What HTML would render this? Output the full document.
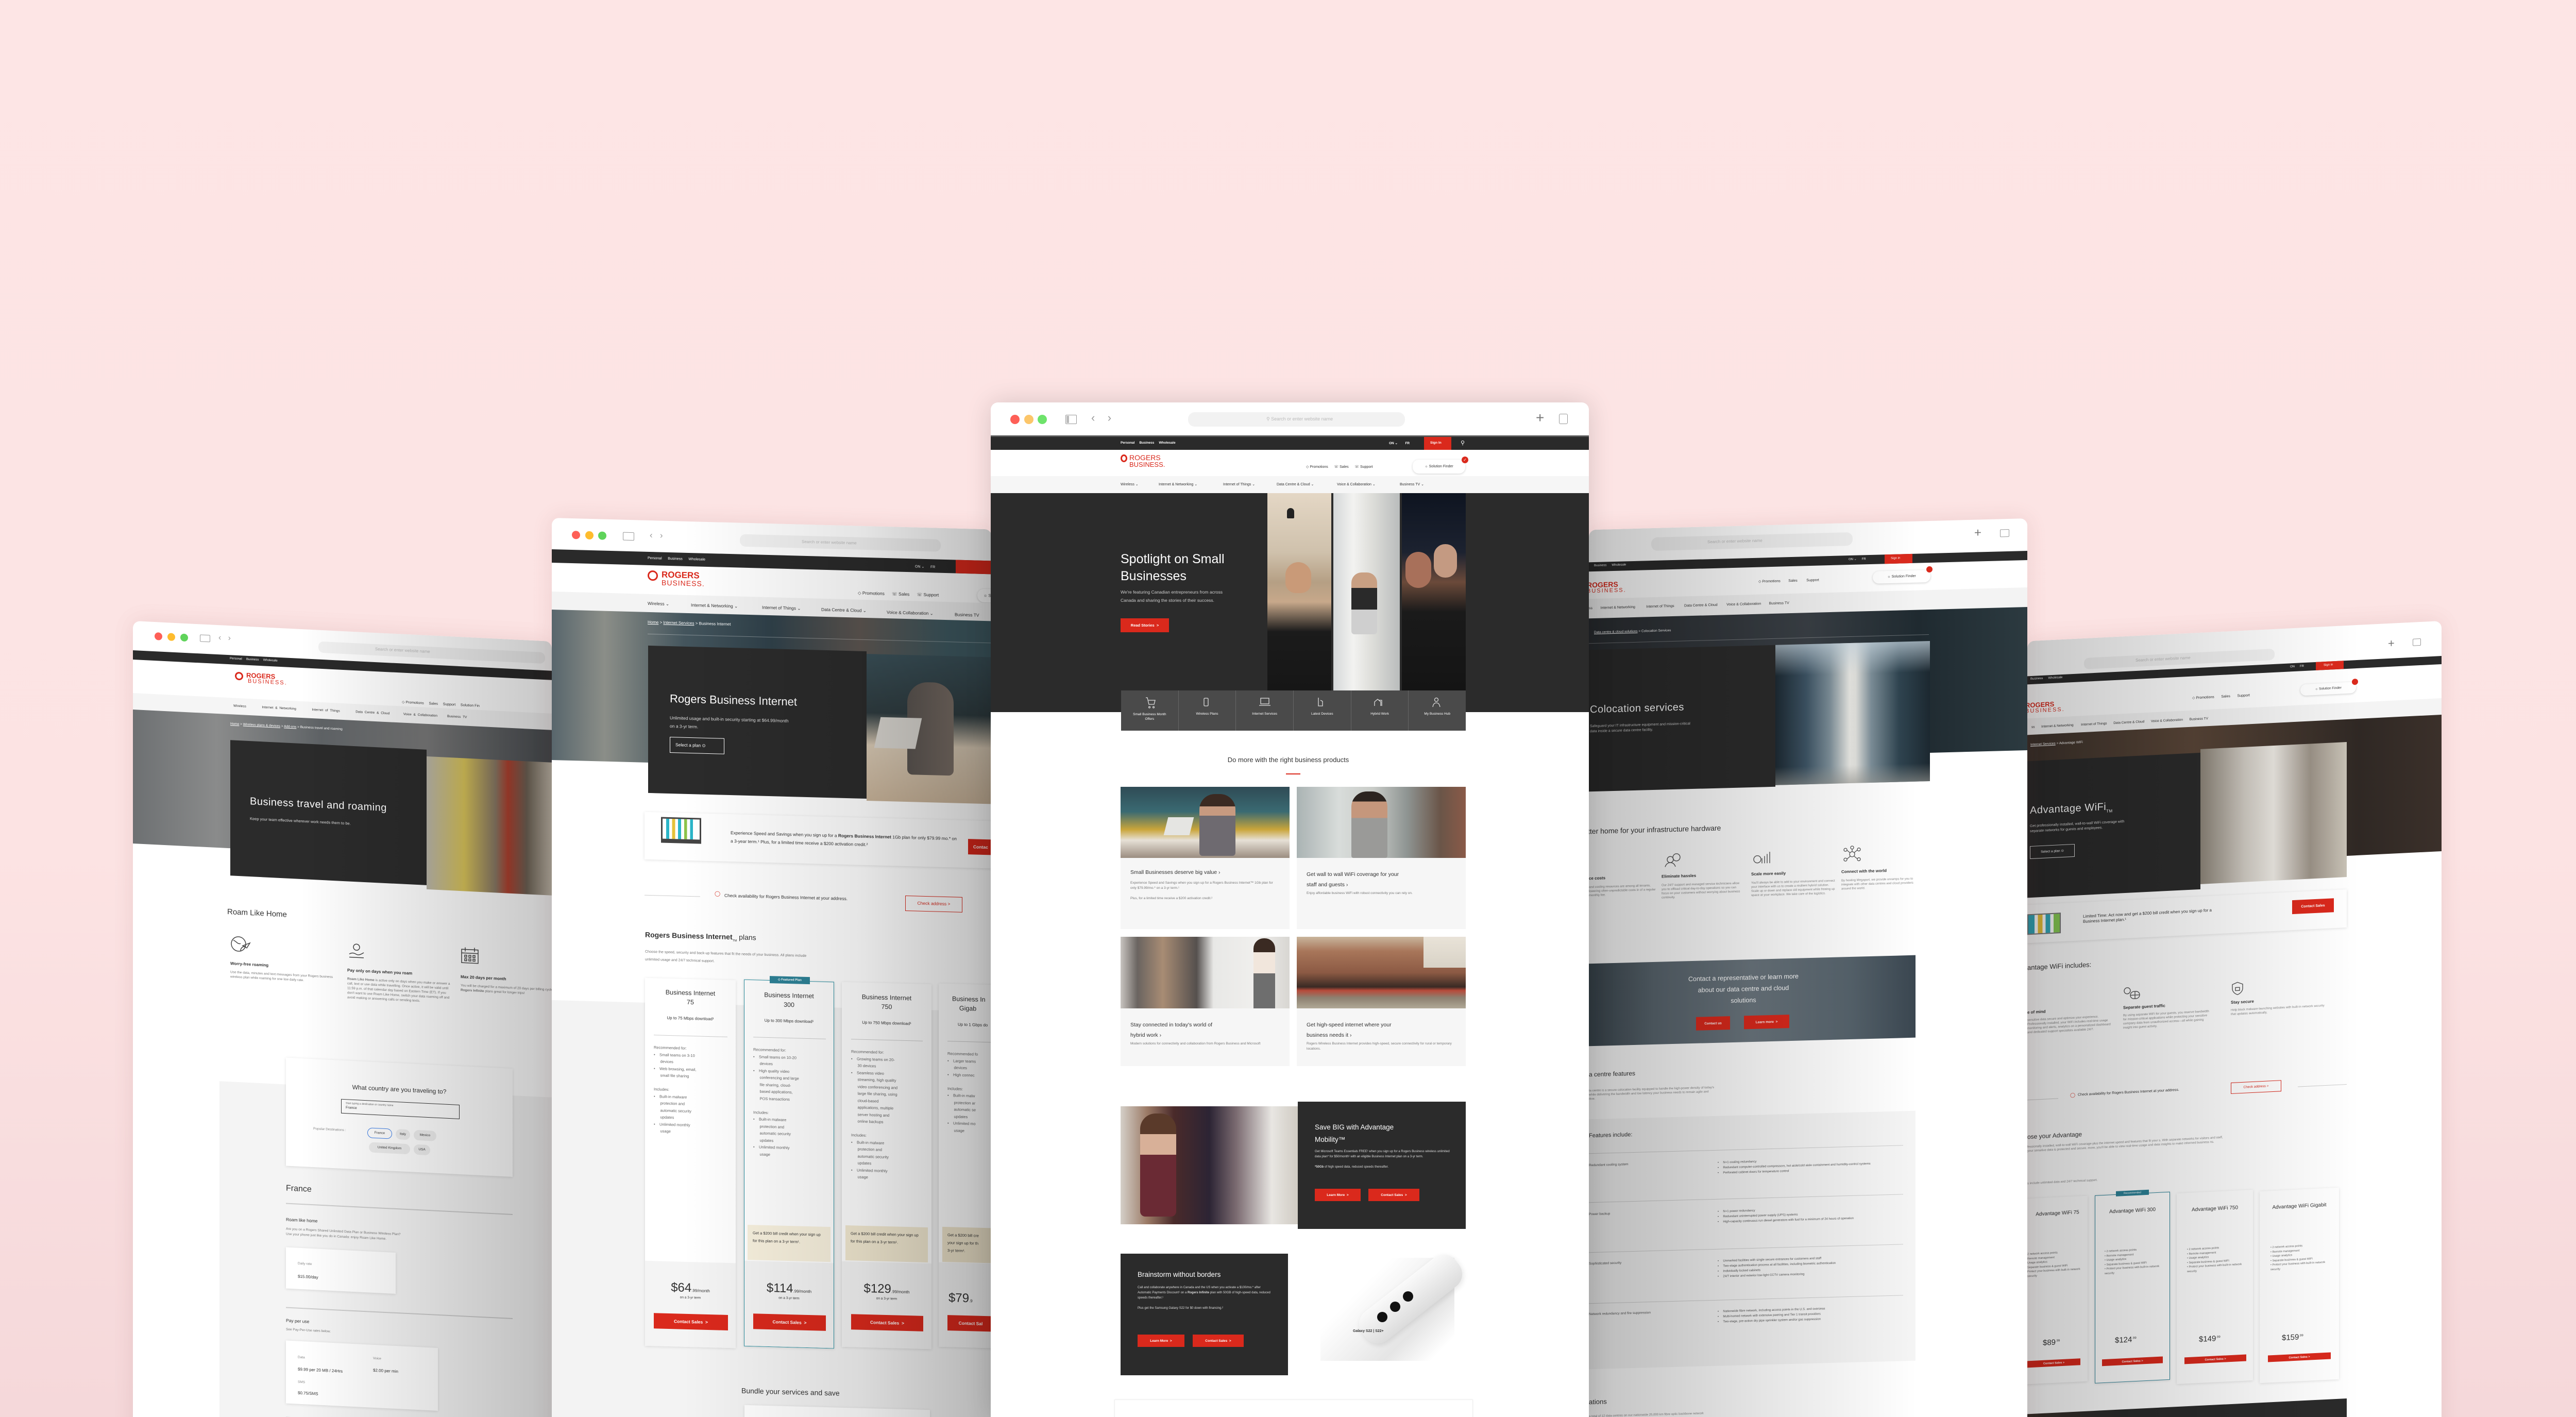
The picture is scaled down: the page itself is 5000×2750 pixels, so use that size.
<!DOCTYPE html>
<html><head><meta charset="utf-8">
<style>
*{margin:0;padding:0;box-sizing:border-box}
html{width:5000px;height:2750px;overflow:hidden;background:#f5d8da}
body{width:5000px;height:2750px;overflow:hidden;position:relative;font-family:"Liberation Sans",Arial,sans-serif;color:#333;
background:linear-gradient(180deg,#fde5e5 0%,#fce3e3 60%,#f5d8da 100%)}
.a{position:absolute}
.win{position:absolute;background:#fff;border-radius:14px 14px 0 0;overflow:hidden;box-shadow:0 0 40px rgba(120,60,60,.12)}
.dot{position:absolute;border-radius:50%}
.t{position:absolute;white-space:nowrap}
.w{color:#fff}
.red{background:#da291c;color:#fff}
.btn{position:absolute;background:#da291c;color:#fff;font-weight:bold;display:flex;align-items:center;justify-content:center;white-space:nowrap}
.card{position:absolute;background:#fff;box-shadow:0 1px 6px rgba(0,0,0,.12)}
.logo{position:absolute;color:#da291c;line-height:1}
.logo .r{position:absolute;left:0;top:1px;border:3px solid #da291c;border-radius:50%}
.ul{text-decoration:underline}
</style></head><body>

<!-- ============ WINDOW A (far left) ============ -->
<div class="win" style="left:258px;top:1205px;width:813px;height:1600px;z-index:1;transform:skewY(2.8deg);transform-origin:0 0">
  <div class="dot" style="left:42px;top:20px;width:15px;height:15px;background:#fe5f57"></div>
  <div class="dot" style="left:67px;top:20px;width:15px;height:15px;background:#febc2e"></div>
  <div class="dot" style="left:92px;top:20px;width:15px;height:15px;background:#5fd35a"></div>
  <div class="a" style="left:130px;top:20px;width:20px;height:14px;border:1.5px solid #999;border-radius:2px"></div>
  <div class="t" style="left:166px;top:16px;font-size:16px;color:#999">&lsaquo; &nbsp; &rsaquo;</div>
  <div class="a" style="left:360px;top:22px;width:440px;height:22px;background:#f2f2f2;border-radius:10px"></div>
  <div class="t" style="left:470px;top:27px;font-size:8px;color:#bbb">Search or enter website name</div>
  <div class="a" style="left:0;top:57px;width:813px;height:18px;background:#2a2a2a"></div>
  <div class="t w" style="left:188px;top:61px;font-size:6px">Personal &nbsp;&nbsp;&nbsp; Business &nbsp;&nbsp;&nbsp; Wholesale</div>
  <div class="logo" style="left:198px;top:88px"><div class="r" style="width:16px;height:16px"></div><div style="margin-left:22px;font-size:13px;font-weight:bold">ROGERS</div><div style="margin-left:25px;font-size:11px;letter-spacing:2px">BUSINESS.</div></div>
  <div class="t" style="left:522px;top:128px;font-size:7px">&#9671; Promotions &nbsp;&nbsp;&nbsp; Sales &nbsp;&nbsp;&nbsp; Support &nbsp;&nbsp;&nbsp; Solution Fin</div>
  <div class="a" style="left:0;top:140px;width:813px;height:32px;background:#f5f5f5"></div>
  <div class="t" style="left:195px;top:152px;font-size:6.5px;word-spacing:2px">Wireless &nbsp;&nbsp;&nbsp;&nbsp;&nbsp;&nbsp; Internet &amp; Networking &nbsp;&nbsp;&nbsp;&nbsp;&nbsp;&nbsp; Internet of Things &nbsp;&nbsp;&nbsp;&nbsp;&nbsp;&nbsp; Data Centre &amp; Cloud &nbsp;&nbsp;&nbsp;&nbsp;&nbsp; Voice &amp; Collaboration &nbsp;&nbsp;&nbsp; Business TV</div>
  <div class="a" style="left:0;top:172px;width:813px;height:260px;background:linear-gradient(90deg,#6d7072,#8a8b8b 20%,#5f6366 45%,#777 70%,#4a4e52)"></div>
  <div class="t w" style="left:189px;top:187px;font-size:6.5px"><span class="ul">Home</span> &gt; <span class="ul">Wireless plans &amp; devices</span> &gt; <span class="ul">Add-ons</span> &gt; Business travel and roaming</div>
  <div class="a" style="left:189px;top:222px;width:381px;height:263px;background:#2b2b2b"></div>
  <div class="t w" style="left:227px;top:328px;font-size:20px;letter-spacing:.5px">Business travel and roaming</div>
  <div class="t" style="left:227px;top:368px;font-size:7.5px;color:#ddd">Keep your team effective wherever work needs them to be.</div>
  <div class="a" style="left:570px;top:235px;width:243px;height:258px;background:linear-gradient(90deg,#b8b4a8,#d9c45a 30%,#8a7a66 55%,#b0412f 65%,#6f6356 80%,#c9c3b3)"></div>
  <div class="t" style="left:183px;top:547px;font-size:15px">Roam Like Home</div>
  <svg class="a" style="left:189px;top:600px" width="40" height="36" viewBox="0 0 40 36" fill="none" stroke="#444" stroke-width="1.5"><circle cx="16" cy="17" r="14"/><path d="M6 10c6 2 8 8 14 6M20 30c0-6 4-8 10-10M24 20l14-6-6 10z"/></svg>
  <div class="t" style="left:189px;top:651px;font-size:8px;font-weight:bold">Worry-free roaming</div>
  <div class="a" style="left:189px;top:668px;width:210px;font-size:6.5px;color:#777;line-height:9px">Use the data, minutes and text messages from your Rogers business wireless plan while roaming for one low daily rate.</div>
  <svg class="a" style="left:416px;top:600px" width="36" height="36" viewBox="0 0 36 36" fill="none" stroke="#444" stroke-width="1.5"><circle cx="18" cy="12" r="6"/><path d="M4 26c6-4 10-2 14 0s8 0 14-4M4 32h28"/></svg>
  <div class="t" style="left:416px;top:653px;font-size:8px;font-weight:bold">Pay only on days when you roam</div>
  <div class="a" style="left:416px;top:670px;width:205px;font-size:6.5px;color:#777;line-height:9px"><b>Roam Like Home</b> is active only on days when you make or answer a call, text or use data while travelling. Once active, it will be valid until 11:59 p.m. of that calendar day based on Eastern Time (ET). If you don't want to use Roam Like Home, switch your data roaming off and avoid making or answering calls or sending texts.</div>
  <svg class="a" style="left:636px;top:600px" width="36" height="36" viewBox="0 0 36 36" fill="none" stroke="#444" stroke-width="1.5"><rect x="2" y="6" width="32" height="26"/><path d="M2 13h32M9 2v8M27 2v8"/><rect x="8" y="17" width="4" height="4"/><rect x="16" y="17" width="4" height="4"/><rect x="24" y="17" width="4" height="4"/><rect x="8" y="24" width="4" height="4"/><rect x="16" y="24" width="4" height="4"/><rect x="24" y="24" width="4" height="4"/></svg>
  <div class="t" style="left:636px;top:655px;font-size:8px;font-weight:bold">Max 20 days per month</div>
  <div class="a" style="left:636px;top:672px;width:190px;font-size:6.5px;color:#777;line-height:9px">You will be charged for a maximum of 20 days per billing cycle on <b>Rogers Infinite</b> plans great for longer trips!</div>
  <div class="a" style="left:168px;top:885px;width:645px;height:715px;background:#f4f4f4"></div>
  <div class="card" style="left:297px;top:833px;width:440px;height:210px"></div>
  <div class="t" style="left:297px;top:877px;width:440px;text-align:center;font-size:12px">What country are you traveling to?</div>
  <div class="a" style="left:404px;top:908px;width:230px;height:28px;border:1.5px solid #333"></div>
  <div class="t" style="left:413px;top:913px;font-size:5px;color:#666">Start typing a destination or country name</div>
  <div class="t" style="left:413px;top:921px;font-size:7px">France</div>
  <div class="t" style="left:350px;top:965px;font-size:6.5px;color:#888">Popular Destinations :</div>
  <div class="a" style="left:455px;top:961px;width:48px;height:20px;border:1.5px solid #3d7ee8;border-radius:10px;font-size:6.5px;text-align:center;line-height:17px">France</div>
  <div class="a" style="left:510px;top:961px;width:28px;height:20px;background:#eee;border-radius:10px;font-size:6.5px;text-align:center;line-height:20px">Italy</div>
  <div class="a" style="left:545px;top:961px;width:44px;height:20px;background:#eee;border-radius:10px;font-size:6.5px;text-align:center;line-height:20px">Mexico</div>
  <div class="a" style="left:458px;top:989px;width:80px;height:20px;background:#eee;border-radius:10px;font-size:6.5px;text-align:center;line-height:20px">United Kingdom</div>
  <div class="a" style="left:545px;top:989px;width:32px;height:20px;background:#eee;border-radius:10px;font-size:6.5px;text-align:center;line-height:20px">USA</div>
  <div class="t" style="left:297px;top:1078px;font-size:16px">France</div>
  <div class="a" style="left:297px;top:1115px;width:440px;height:2px;background:#ccc"></div>
  <div class="t" style="left:297px;top:1142px;font-size:8.5px">Roam like home</div>
  <div class="t" style="left:297px;top:1161px;font-size:6.5px;color:#777;line-height:10px">Are you on a Rogers Shared Unlimited Data Plan or Business Wireless Plan?<br>Use your phone just like you do in Canada: enjoy Roam Like Home.</div>
  <div class="card" style="left:297px;top:1201px;width:213px;height:80px"></div>
  <div class="t" style="left:320px;top:1228px;font-size:6.5px;color:#888">Daily rate</div>
  <div class="t" style="left:320px;top:1252px;font-size:8px">$15.00/day</div>
  <div class="a" style="left:297px;top:1317px;width:440px;height:2px;background:#ccc"></div>
  <div class="t" style="left:297px;top:1338px;font-size:8.5px">Pay per use</div>
  <div class="t" style="left:297px;top:1357px;font-size:6.5px;color:#777">See Pay-Per-Use rates below.</div>
  <div class="card" style="left:297px;top:1382px;width:295px;height:122px"></div>
  <div class="t" style="left:320px;top:1410px;font-size:6.5px;color:#888">Data</div>
  <div class="t" style="left:320px;top:1432px;font-size:8px">$9.99 per 20 MB / 24Hrs</div>
  <div class="t" style="left:320px;top:1458px;font-size:6.5px;color:#888">SMS</div>
  <div class="t" style="left:320px;top:1478px;font-size:8px">$0.75/SMS</div>
  <div class="t" style="left:466px;top:1405px;font-size:6.5px;color:#888">Voice</div>
  <div class="t" style="left:466px;top:1427px;font-size:8px">$2.00 per min</div>
  <div class="a" style="left:297px;top:1530px;width:440px;height:2px;background:#ccc"></div>
  <div class="a" style="left:0;top:0;width:813px;height:1600px;background:linear-gradient(90deg,rgba(0,0,0,0) 40%,rgba(0,0,0,.22) 100%)"></div>
</div>

<!-- ============ WINDOW E (far right) ============ -->
<div class="win" style="left:3935px;top:1205px;width:804px;height:1600px;z-index:1;transform:skewY(-2.8deg);transform-origin:100% 0">
  <div class="a" style="left:110px;top:38px;width:370px;height:22px;background:#f2f2f2;border-radius:10px"></div>
  <div class="t" style="left:210px;top:43px;font-size:8px;color:#bbb">Search or enter website name</div>
  <div class="t" style="left:700px;top:26px;font-size:22px;color:#777">+</div>
  <div class="a" style="left:748px;top:32px;width:16px;height:14px;border:1.5px solid #999;border-radius:2px"></div>
  <div class="a" style="left:0;top:68px;width:804px;height:16px;background:#2a2a2a"></div>
  <div class="t w" style="left:6px;top:71px;font-size:6px">Business &nbsp;&nbsp;&nbsp;&nbsp; Wholesale</div>
  <div class="a red" style="left:560px;top:68px;width:54px;height:16px"></div>
  <div class="t w" style="left:575px;top:72px;font-size:6px">Sign in</div>
  <div class="t w" style="left:510px;top:72px;font-size:6px">ON &nbsp;&nbsp;&nbsp;&nbsp; FR</div>
  <div class="logo" style="left:-4px;top:118px"><div style="font-size:13px;font-weight:bold">ROGERS</div><div style="font-size:11px;letter-spacing:2px">BUSINESS.</div></div>
  <div class="t" style="left:320px;top:122px;font-size:7px">&#9671; Promotions &nbsp;&nbsp;&nbsp;&nbsp;&nbsp; Sales &nbsp;&nbsp;&nbsp;&nbsp;&nbsp; Support</div>
  <div class="a" style="left:530px;top:110px;width:108px;height:22px;border-radius:11px;box-shadow:0 1px 4px rgba(0,0,0,.2);font-size:6.5px;line-height:22px;text-align:center">&#9788; Solution Finder</div>
  <div class="dot" style="left:630px;top:104px;width:12px;height:12px;background:#da291c"></div>
  <div class="a" style="left:0;top:150px;width:804px;height:32px;background:#f4f4f4"></div>
  <div class="t" style="left:8px;top:164px;font-size:6.5px">ss &nbsp;&nbsp;&nbsp;&nbsp;&nbsp; Internet &amp; Networking &nbsp;&nbsp;&nbsp;&nbsp;&nbsp;&nbsp; Internet of Things &nbsp;&nbsp;&nbsp;&nbsp;&nbsp; Data Centre &amp; Cloud &nbsp;&nbsp;&nbsp;&nbsp;&nbsp; Voice &amp; Collaboration &nbsp;&nbsp;&nbsp;&nbsp;&nbsp; Business TV</div>
  <div class="a" style="left:0;top:182px;width:804px;height:265px;background:linear-gradient(90deg,#3d332c,#5a4638 40%,#2f2824 80%,#3b302a)"></div>
  <div class="t w" style="left:6px;top:198px;font-size:6.5px"><span class="ul">Internet Services</span> &gt; Advantage WiFi</div>
  <div class="a" style="left:0;top:233px;width:336px;height:265px;background:#2b2b2b"></div>
  <div class="t w" style="left:5px;top:318px;font-size:20px;letter-spacing:.5px">Advantage WiFi<sub style="font-size:8px">TM</sub></div>
  <div class="t" style="left:5px;top:355px;font-size:7px;color:#ddd;line-height:10px">Get professionally installed, wall-to-wall WiFi coverage with<br>separate networks for guests and employees.</div>
  <div class="a" style="left:5px;top:398px;width:87px;height:25px;border:1px solid #ddd;color:#fff;font-size:6.5px;line-height:23px;text-align:center">Select a plan &#8857;</div>
  <div class="a" style="left:336px;top:226px;width:284px;height:262px;background:linear-gradient(90deg,#8c8478,#cfcac2 30%,#e9e6e0 50%,#9a9186 75%,#c8c2b6)"></div>
  <div class="card" style="left:0;top:512px;width:620px;height:74px"></div>
  <div class="a" style="left:0;top:530px;width:65px;height:40px;border:2px solid #777;background:linear-gradient(90deg,#3ab 0 20%,#fff 20% 30%,#e9c33a 30% 45%,#fff 45% 55%,#3ab 55% 70%,#fff 70% 80%,#8c5 80%)"></div>
  <div class="t" style="left:108px;top:535px;font-size:8px;line-height:10px">Limited Time: Act now and get a $200 bill credit when you sign up for a<br>Business Internet plan.¹</div>
  <div class="btn" style="left:514px;top:528px;width:81px;height:27px;font-size:7px">Contact Sales</div>
  <div class="t" style="left:0;top:626px;font-size:13px">antage WiFi includes:</div>
  <div class="t" style="left:0;top:716px;font-size:8px;font-weight:bold">e of mind</div>
  <div class="a" style="left:0;top:732px;width:170px;font-size:6px;color:#888;line-height:8px">sensitive data secure and optimize your experience. Professionally installed, your WiFi includes real-time usage monitoring and alerts, analytics on a personalized dashboard and dedicated support specialists available 24/7.</div>
  <svg class="a" style="left:186px;top:680px" width="34" height="28" viewBox="0 0 34 28" fill="none" stroke="#555" stroke-width="1.4"><circle cx="8" cy="8" r="6"/><rect x="14" y="10" width="18" height="14" rx="7"/><path d="M23 10v14M14 17h18"/></svg>
  <div class="t" style="left:186px;top:716px;font-size:8px;font-weight:bold">Separate guest traffic</div>
  <div class="a" style="left:186px;top:732px;width:175px;font-size:6px;color:#888;line-height:8px">By using separate WiFi for your guests, you reserve bandwidth for mission-critical applications while protecting your sensitive company data from unauthorized access—all while gaining insight into guest activity.</div>
  <svg class="a" style="left:395px;top:680px" width="26" height="28" viewBox="0 0 26 28" fill="none" stroke="#555" stroke-width="1.4"><path d="M13 2l10 4v8c0 6-5 10-10 12C8 24 3 20 3 14V6z"/><rect x="9" y="12" width="8" height="6"/></svg>
  <div class="t" style="left:395px;top:716px;font-size:8px;font-weight:bold">Stay secure</div>
  <div class="a" style="left:395px;top:732px;width:185px;font-size:6px;color:#888;line-height:8px">Help block malware-launching websites with built-in network security that updates automatically.</div>
  <div class="a" style="left:0;top:890px;width:60px;height:1px;background:#ccc"></div>
  <div class="t" style="left:83px;top:880px;font-size:9px;color:#da291c">&#9711;</div>
  <div class="t" style="left:98px;top:882px;font-size:7px">Check availability for Rogers Business Internet at your address.</div>
  <div class="a" style="left:395px;top:876px;width:98px;height:22px;border:1.5px solid #da291c;color:#da291c;font-size:6.5px;line-height:19px;text-align:center">Check address &gt;</div>
  <div class="a" style="left:525px;top:890px;width:95px;height:1px;background:#ccc"></div>
  <div class="t" style="left:0;top:955px;font-size:12px">ose your Advantage</div>
  <div class="a" style="left:0;top:978px;width:380px;font-size:6px;color:#888;line-height:8px">fessionally installed, wall-to-wall WiFi coverage plus the internet speed and features that fit your s. With separate networks for visitors and staff, your sensitive data is protected and secure. more, you'll be able to view real-time usage and data insights to make informed business ns.</div>
  <div class="t" style="left:0;top:1050px;font-size:6px;color:#888">s include unlimited data and 24/7 technical support.</div>

  <div class="card" style="left:-10px;top:1082px;width:127px;height:360px"></div>
  <div class="card" style="left:131px;top:1082px;width:146px;height:365px;border:1.5px solid #2d8297"></div>
  <div class="a" style="left:172px;top:1076px;width:64px;height:10px;background:#2d8297;color:#fff;font-size:5px;text-align:center;line-height:10px">Recommended</div>
  <div class="card" style="left:290px;top:1086px;width:148px;height:370px"></div>
  <div class="card" style="left:451px;top:1090px;width:154px;height:372px"></div>
  <div class="t" style="left:0;top:1108px;font-size:10px;text-align:center;width:117px;line-height:11px;white-space:normal">Advantage WiFi 75</div>
  <div class="t" style="left:131px;top:1110px;font-size:10px;text-align:center;width:146px;line-height:11px;white-space:normal">Advantage WiFi 300</div>
  <div class="t" style="left:290px;top:1114px;font-size:10px;text-align:center;width:148px;line-height:11px;white-space:normal">Advantage WiFi 750</div>
  <div class="t" style="left:451px;top:1117px;font-size:10px;text-align:center;width:154px;line-height:11px;white-space:normal">Advantage WiFi Gigabit</div>
  <div class="a" style="left:150px;top:1188px;width:120px;font-size:5.5px;color:#666;line-height:8.5px">• 2 network access points<br>• Remote management<br>• Usage analytics<br>• Separate business &amp; guest WiFi<br>• Protect your business with built-in network security</div>
  <div class="a" style="left:310px;top:1192px;width:120px;font-size:5.5px;color:#666;line-height:8.5px">• 2 network access points<br>• Remote management<br>• Usage analytics<br>• Separate business &amp; guest WiFi<br>• Protect your business with built-in network security</div>
  <div class="a" style="left:472px;top:1196px;width:125px;font-size:5.5px;color:#666;line-height:8.5px">• 2 network access points<br>• Remote management<br>• Usage analytics<br>• Separate business &amp; guest WiFi<br>• Protect your business with built-in network security</div>
  <div class="a" style="left:0;top:1186px;width:110px;font-size:5.5px;color:#666;line-height:8.5px">2 network access points<br>Remote management<br>Usage analytics<br>Separate business &amp; guest WiFi<br>Protect your business with built-in network security</div>
  <div class="t" style="left:30px;top:1355px;font-size:15px">$89<sup style="font-size:6px">.99</sup></div>
  <div class="t" style="left:170px;top:1357px;font-size:15px">$124<sup style="font-size:6px">.99</sup></div>
  <div class="t" style="left:333px;top:1363px;font-size:15px">$149<sup style="font-size:6px">.99</sup></div>
  <div class="t" style="left:494px;top:1368px;font-size:15px">$159<sup style="font-size:6px">.99</sup></div>
  <div class="btn" style="left:0;top:1397px;width:103px;height:13px;font-size:5.5px">Contact Sales &gt;</div>
  <div class="btn" style="left:145px;top:1401px;width:118px;height:13px;font-size:5.5px">Contact Sales &gt;</div>
  <div class="btn" style="left:305px;top:1405px;width:120px;height:13px;font-size:5.5px">Contact Sales &gt;</div>
  <div class="btn" style="left:467px;top:1409px;width:122px;height:13px;font-size:5.5px">Contact Sales &gt;</div>
  <div class="a" style="left:0;top:1500px;width:620px;height:100px;background:linear-gradient(90deg,#3a302a,#2b2b2b 30%)"></div>
  <div class="t w" style="left:191px;top:1524px;font-size:12px">Get the WiFi advantage</div>
  <div class="a" style="left:0;top:0;width:804px;height:1600px;background:linear-gradient(90deg,rgba(0,0,0,.22) 0%,rgba(0,0,0,.05) 60%,rgba(0,0,0,0) 80%)"></div>
</div>

<!-- ============ WINDOW B (left center) ============ -->
<div class="win" style="left:1071px;top:1005px;width:854px;height:1800px;z-index:2;transform:skewY(1.5deg);transform-origin:0 0">
  <div class="dot" style="left:39px;top:24px;width:16px;height:16px;background:#fe5f57"></div>
  <div class="dot" style="left:65px;top:24px;width:16px;height:16px;background:#febc2e"></div>
  <div class="dot" style="left:90px;top:24px;width:16px;height:16px;background:#5fd35a"></div>
  <div class="a" style="left:138px;top:24px;width:22px;height:16px;border:1.5px solid #999;border-radius:2px"></div>
  <div class="t" style="left:190px;top:19px;font-size:17px;color:#999">&lsaquo; &nbsp; &rsaquo;</div>
  <div class="a" style="left:365px;top:22px;width:390px;height:24px;background:#f2f2f2;border-radius:11px"></div>
  <div class="t" style="left:485px;top:29px;font-size:8px;color:#bbb">Search or enter website name</div>
  <div class="a" style="left:0;top:61px;width:854px;height:26px;background:#2a2a2a"></div>
  <div class="t w" style="left:186px;top:70px;font-size:7px">Personal &nbsp;&nbsp;&nbsp;&nbsp; Business &nbsp;&nbsp;&nbsp;&nbsp; Wholesale</div>
  <div class="t w" style="left:705px;top:72px;font-size:7px">ON &#8964; &nbsp;&nbsp;&nbsp;&nbsp; FR</div>
  <div class="a red" style="left:784px;top:61px;width:70px;height:26px"></div>
  <div class="logo" style="left:186px;top:96px"><div class="r" style="width:20px;height:20px"></div><div style="margin-left:27px;font-size:17px;font-weight:bold">ROGERS</div><div style="margin-left:27px;font-size:14px;letter-spacing:1px">BUSINESS.</div></div>
  <div class="t" style="left:594px;top:125px;font-size:8.5px">&#9671; Promotions &nbsp;&nbsp;&nbsp;&nbsp; &#9743; Sales &nbsp;&nbsp;&nbsp;&nbsp; &#9743; Support</div>
  <div class="a" style="left:826px;top:116px;width:60px;height:26px;border-radius:13px;box-shadow:0 1px 4px rgba(0,0,0,.2);font-size:8px;line-height:26px;padding-left:12px">&#9788; Solu</div>
  <div class="a" style="left:0;top:143px;width:854px;height:35px;background:#f3f3f3"></div>
  <div class="t" style="left:186px;top:156px;font-size:8.5px">Wireless &#8964;</div>
  <div class="t" style="left:270px;top:157px;font-size:8.5px">Internet &amp; Networking &#8964;</div>
  <div class="t" style="left:408px;top:158px;font-size:8.5px">Internet of Things &#8964;</div>
  <div class="t" style="left:523px;top:159px;font-size:8.5px">Data Centre &amp; Cloud &#8964;</div>
  <div class="t" style="left:650px;top:161px;font-size:8.5px">Voice &amp; Collaboration &#8964;</div>
  <div class="t" style="left:782px;top:162px;font-size:8.5px">Business TV</div>
  <div class="a" style="left:0;top:178px;width:854px;height:292px;background:linear-gradient(90deg,#58666c,#8b8e88 12%,#44555d 30%,#2f4049 50%,#5c5550 70%,#3f5a62 90%)"></div>
  <div class="t w" style="left:186px;top:193px;font-size:8px"><span class="ul">Home</span> &gt; <span class="ul">Internet Services</span> &gt; Business Internet</div>
  <div class="a" style="left:186px;top:220px;width:668px;height:1px;background:rgba(255,255,255,.35)"></div>
  <div class="a" style="left:187px;top:243px;width:424px;height:286px;background:#2b2b2b"></div>
  <div class="t w" style="left:229px;top:332px;font-size:22px">Rogers Business Internet</div>
  <div class="t" style="left:229px;top:374px;font-size:8.5px;color:#ddd;line-height:16px">Unlimited usage and built-in security starting at $64.99/month<br>on a 3-yr term.</div>
  <div class="a" style="left:229px;top:419px;width:106px;height:31px;border:1px solid #fff;color:#fff;font-size:8.5px;line-height:29px;padding-left:10px">Select a plan &#8857;</div>
  <div class="a" style="left:611px;top:248px;width:243px;height:285px;background:linear-gradient(180deg,#3a5058 0%,#2f3c40 40%,#d8c9b4 62%,#c9b49a 100%)"></div>
  <div class="a" style="left:690px;top:300px;width:90px;height:180px;background:linear-gradient(90deg,#5a5450,#7a6e66);border-radius:40px 40px 10px 10px"></div>
  <div class="a" style="left:632px;top:370px;width:80px;height:60px;background:#d9d6d0;transform:skewX(-12deg)"></div>
  <div class="card" style="left:180px;top:566px;width:674px;height:92px"></div>
  <div class="a" style="left:212px;top:575px;width:78px;height:50px;border:3px solid #444;border-bottom-width:8px;background:linear-gradient(90deg,#fff 10%,#2bb5c8 10% 18%,#fff 18% 26%,#e5c23a 26% 34%,#fff 34% 42%,#2bb5c8 42% 50%,#fff 50% 58%,#8bc34a 58% 66%,#fff 66% 74%,#2bb5c8 74% 82%,#fff 82%)"></div>
  <div class="a" style="left:347px;top:594px;width:440px;font-size:8.5px;line-height:16px">Experience Speed and Savings when you sign up for a <b>Rogers Business Internet</b> 1Gb plan for only $79.99 mo.* on a 3-year term.¹ Plus, for a limited time receive a $200 activation credit.²</div>
  <div class="btn" style="left:808px;top:602px;width:60px;height:30px;font-size:8.5px;justify-content:flex-start;padding-left:10px">Contac</div>
  <div class="a" style="left:180px;top:727px;width:108px;height:1px;background:#ccc"></div>
  <div class="t" style="left:316px;top:716px;font-size:10px;color:#da291c">&#9711;</div>
  <div class="t" style="left:335px;top:719px;font-size:8.5px">Check availability for Rogers Business Internet at your address.</div>
  <div class="a" style="left:686px;top:715px;width:111px;height:30px;border:1.5px solid #da291c;color:#da291c;font-size:8.5px;line-height:27px;text-align:center">Check address &gt;</div>
  <div class="a" style="left:0;top:936px;width:854px;height:864px;background:#f3f3f3"></div>
  <div class="t" style="left:181px;top:796px;font-size:14px"><b>Rogers Business Internet</b><sub style="font-size:6px">TM</sub> plans</div>
  <div class="t" style="left:181px;top:830px;font-size:7px;color:#777;line-height:15px">Choose the speed, security and back-up features that fit the needs of your business. All plans include<br>unlimited usage and 24/7 technical support.</div>

  <div class="card" style="left:181px;top:888px;width:176px;height:714px"></div>
  <div class="card" style="left:373px;top:886px;width:175px;height:712px;border:1.5px solid #2b8fa0"></div>
  <div class="a" style="left:423px;top:878px;width:78px;height:14px;background:#2d8297;color:#fff;font-size:6px;text-align:center;line-height:14px;font-weight:bold">&#9671; Featured Plan</div>
  <div class="card" style="left:563px;top:886px;width:174px;height:708px"></div>
  <div class="card" style="left:751px;top:884px;width:110px;height:705px"></div>
  <div class="a" style="left:181px;top:1437px;width:176px;height:165px;background:#f4f4f4"></div>
  <div class="a" style="left:374px;top:1432px;width:173px;height:165px;background:#f4f4f4"></div>
  <div class="a" style="left:563px;top:1428px;width:174px;height:166px;background:#f4f4f4"></div>
  <div class="a" style="left:751px;top:1425px;width:110px;height:164px;background:#f4f4f4"></div>
  <div class="t" style="left:181px;top:906px;width:176px;text-align:center;font-size:12.5px;line-height:18px;white-space:normal">Business Internet<br>75</div>
  <div class="t" style="left:373px;top:906px;width:175px;text-align:center;font-size:12.5px;line-height:18px;white-space:normal">Business Internet<br>300</div>
  <div class="t" style="left:563px;top:905px;width:174px;text-align:center;font-size:12.5px;line-height:18px;white-space:normal">Business Internet<br>750</div>
  <div class="t" style="left:777px;top:904px;font-size:12.5px;line-height:18px">Business In<br>&nbsp;&nbsp;&nbsp;&nbsp;Gigab</div>
  <div class="t" style="left:181px;top:960px;width:176px;text-align:center;font-size:8px">Up to 75 Mbps download¹</div>
  <div class="t" style="left:373px;top:960px;width:175px;text-align:center;font-size:8px">Up to 300 Mbps download¹</div>
  <div class="t" style="left:563px;top:959px;width:174px;text-align:center;font-size:8px">Up to 750 Mbps download¹</div>
  <div class="t" style="left:788px;top:958px;font-size:8px">Up to 1 Gbps do</div>
  <div class="a" style="left:198px;top:998px;width:143px;height:1px;background:#ccc"></div>
  <div class="a" style="left:391px;top:997px;width:141px;height:1px;background:#ccc"></div>
  <div class="a" style="left:581px;top:996px;width:139px;height:1px;background:#ccc"></div>
  <div class="a" style="left:768px;top:995px;width:90px;height:1px;background:#ccc"></div>
  <div class="a" style="left:198px;top:1016px;width:145px;font-size:7.5px;color:#666;line-height:13.5px">Recommended for:<br>• &nbsp;&nbsp;&nbsp;Small teams on 3-10<br>&nbsp;&nbsp;&nbsp;&nbsp;&nbsp;&nbsp;devices<br>• &nbsp;&nbsp;&nbsp;Web browsing, email,<br>&nbsp;&nbsp;&nbsp;&nbsp;&nbsp;&nbsp;small file sharing<br><br>Includes:<br>• &nbsp;&nbsp;&nbsp;Built-in malware<br>&nbsp;&nbsp;&nbsp;&nbsp;&nbsp;&nbsp;protection and<br>&nbsp;&nbsp;&nbsp;&nbsp;&nbsp;&nbsp;automatic security<br>&nbsp;&nbsp;&nbsp;&nbsp;&nbsp;&nbsp;updates<br>• &nbsp;&nbsp;&nbsp;Unlimited monthly<br>&nbsp;&nbsp;&nbsp;&nbsp;&nbsp;&nbsp;usage</div>
  <div class="a" style="left:391px;top:1015px;width:145px;font-size:7.5px;color:#666;line-height:13.5px">Recommended for:<br>• &nbsp;&nbsp;&nbsp;Small teams on 10-20<br>&nbsp;&nbsp;&nbsp;&nbsp;&nbsp;&nbsp;devices<br>• &nbsp;&nbsp;&nbsp;High quality video<br>&nbsp;&nbsp;&nbsp;&nbsp;&nbsp;&nbsp;conferencing and large<br>&nbsp;&nbsp;&nbsp;&nbsp;&nbsp;&nbsp;file sharing, cloud-<br>&nbsp;&nbsp;&nbsp;&nbsp;&nbsp;&nbsp;based applications,<br>&nbsp;&nbsp;&nbsp;&nbsp;&nbsp;&nbsp;POS transactions<br><br>Includes:<br>• &nbsp;&nbsp;&nbsp;Built-in malware<br>&nbsp;&nbsp;&nbsp;&nbsp;&nbsp;&nbsp;protection and<br>&nbsp;&nbsp;&nbsp;&nbsp;&nbsp;&nbsp;automatic security<br>&nbsp;&nbsp;&nbsp;&nbsp;&nbsp;&nbsp;updates<br>• &nbsp;&nbsp;&nbsp;Unlimited monthly<br>&nbsp;&nbsp;&nbsp;&nbsp;&nbsp;&nbsp;usage</div>
  <div class="a" style="left:581px;top:1014px;width:145px;font-size:7.5px;color:#666;line-height:13.5px">Recommended for:<br>• &nbsp;&nbsp;&nbsp;Growing teams on 20-<br>&nbsp;&nbsp;&nbsp;&nbsp;&nbsp;&nbsp;30 devices<br>• &nbsp;&nbsp;&nbsp;Seamless video<br>&nbsp;&nbsp;&nbsp;&nbsp;&nbsp;&nbsp;streaming, high quality<br>&nbsp;&nbsp;&nbsp;&nbsp;&nbsp;&nbsp;video conferencing and<br>&nbsp;&nbsp;&nbsp;&nbsp;&nbsp;&nbsp;large file sharing, using<br>&nbsp;&nbsp;&nbsp;&nbsp;&nbsp;&nbsp;cloud-based<br>&nbsp;&nbsp;&nbsp;&nbsp;&nbsp;&nbsp;applications, multiple<br>&nbsp;&nbsp;&nbsp;&nbsp;&nbsp;&nbsp;server hosting and<br>&nbsp;&nbsp;&nbsp;&nbsp;&nbsp;&nbsp;online backups<br><br>Includes:<br>• &nbsp;&nbsp;&nbsp;Built-in malware<br>&nbsp;&nbsp;&nbsp;&nbsp;&nbsp;&nbsp;protection and<br>&nbsp;&nbsp;&nbsp;&nbsp;&nbsp;&nbsp;automatic security<br>&nbsp;&nbsp;&nbsp;&nbsp;&nbsp;&nbsp;updates<br>• &nbsp;&nbsp;&nbsp;Unlimited monthly<br>&nbsp;&nbsp;&nbsp;&nbsp;&nbsp;&nbsp;usage</div>
  <div class="a" style="left:768px;top:1013px;width:100px;font-size:7.5px;color:#666;line-height:13.5px">Recommended fo<br>• &nbsp;&nbsp;&nbsp;Larger teams<br>&nbsp;&nbsp;&nbsp;&nbsp;&nbsp;&nbsp;devices<br>• &nbsp;&nbsp;&nbsp;High connec<br><br>Includes:<br>• &nbsp;&nbsp;&nbsp;Built-in malw<br>&nbsp;&nbsp;&nbsp;&nbsp;&nbsp;&nbsp;protection ar<br>&nbsp;&nbsp;&nbsp;&nbsp;&nbsp;&nbsp;automatic se<br>&nbsp;&nbsp;&nbsp;&nbsp;&nbsp;&nbsp;updates<br>• &nbsp;&nbsp;&nbsp;Unlimited mo<br>&nbsp;&nbsp;&nbsp;&nbsp;&nbsp;&nbsp;usage</div>
  <div class="a" style="left:380px;top:1362px;width:161px;height:68px;background:#f8f1de;font-size:7.5px;line-height:15px;padding:8px 10px">Get a $200 bill credit when your sign up for this plan on a 3-yr term¹.</div>
  <div class="a" style="left:570px;top:1358px;width:160px;height:68px;background:#f3ead2;font-size:7.5px;line-height:15px;padding:8px 10px">Get a $200 bill credit when your sign up for this plan on a 3-yr term¹.</div>
  <div class="a" style="left:758px;top:1356px;width:100px;height:68px;background:#efe5cc;font-size:7.5px;line-height:15px;padding:8px 10px;white-space:nowrap;overflow:hidden">Get a $200 bill cre<br>your sign up for th<br>3-yr term¹.</div>
  <div class="t" style="left:181px;top:1474px;width:176px;text-align:center;font-size:24px">$64<span style="font-size:8px">.99/month</span></div>
  <div class="t" style="left:373px;top:1470px;width:175px;text-align:center;font-size:24px">$114<span style="font-size:8px">.99/month</span></div>
  <div class="t" style="left:563px;top:1466px;width:174px;text-align:center;font-size:24px">$129<span style="font-size:8px">.99/month</span></div>
  <div class="t" style="left:770px;top:1480px;font-size:24px">$79<span style="font-size:8px">.9</span></div>
  <div class="t" style="left:181px;top:1503px;width:176px;text-align:center;font-size:6.5px">on a 3-yr term</div>
  <div class="t" style="left:373px;top:1499px;width:175px;text-align:center;font-size:6.5px">on a 3-yr term</div>
  <div class="t" style="left:563px;top:1495px;width:174px;text-align:center;font-size:6.5px">on a 3-yr term</div>
  <div class="btn" style="left:198px;top:1538px;width:144px;height:30px;font-size:8.5px">Contact Sales &nbsp;&gt;</div>
  <div class="btn" style="left:391px;top:1534px;width:141px;height:30px;font-size:8.5px">Contact Sales &nbsp;&gt;</div>
  <div class="btn" style="left:581px;top:1530px;width:140px;height:30px;font-size:8.5px">Contact Sales &nbsp;&gt;</div>
  <div class="btn" style="left:768px;top:1527px;width:90px;height:30px;font-size:8.5px">Contact Sal</div>
  <div class="t" style="left:368px;top:1676px;font-size:14px">Bundle your services and save</div>
  <div class="card" style="left:374px;top:1712px;width:360px;height:90px"></div>
  <div class="a" style="left:0;top:0;width:854px;height:1800px;background:linear-gradient(90deg,rgba(0,0,0,0) 30%,rgba(0,0,0,.1) 70%,rgba(0,0,0,.26) 100%)"></div>
</div>

<!-- ============ WINDOW D (right center) ============ -->
<div class="win" style="left:3084px;top:1006px;width:851px;height:1800px;z-index:2;transform:skewY(-1.5deg);transform-origin:100% 0">
  <div class="a" style="left:121px;top:18px;width:391px;height:26px;background:#f2f2f2;border-radius:12px"></div>
  <div class="t" style="left:230px;top:25px;font-size:8px;color:#bbb">Search or enter website name</div>
  <div class="t" style="left:748px;top:12px;font-size:24px;color:#777">+</div>
  <div class="a" style="left:798px;top:20px;width:18px;height:15px;border:1.5px solid #999;border-radius:2px"></div>
  <div class="a" style="left:0;top:63px;width:851px;height:18px;background:#2a2a2a"></div>
  <div class="t w" style="left:10px;top:67px;font-size:6px">Business &nbsp;&nbsp;&nbsp;&nbsp; Wholesale</div>
  <div class="t w" style="left:504px;top:67px;font-size:6px">ON &#8964; &nbsp;&nbsp;&nbsp;&nbsp; FR</div>
  <div class="a red" style="left:574px;top:63px;width:54px;height:18px"></div>
  <div class="t w" style="left:586px;top:68px;font-size:6px">Sign in</div>
  <div class="logo" style="left:-4px;top:100px"><div style="font-size:14px;font-weight:bold">ROGERS</div><div style="font-size:11px;letter-spacing:2px">BUSINESS.</div></div>
  <div class="t" style="left:329px;top:105px;font-size:7px">&#9671; Promotions &nbsp;&nbsp;&nbsp;&nbsp;&nbsp;&nbsp; Sales &nbsp;&nbsp;&nbsp;&nbsp;&nbsp;&nbsp;&nbsp; Support</div>
  <div class="a" style="left:551px;top:95px;width:112px;height:24px;border-radius:12px;box-shadow:0 1px 4px rgba(0,0,0,.2);font-size:7px;line-height:24px;text-align:center">&#9788; Solution Finder</div>
  <div class="dot" style="left:655px;top:88px;width:12px;height:12px;background:#da291c"></div>
  <div class="a" style="left:0;top:134px;width:851px;height:38px;background:#f3f3f3"></div>
  <div class="t" style="left:0;top:149px;font-size:7px">ss &nbsp;&nbsp;&nbsp;&nbsp;&nbsp;&nbsp; Internet &amp; Networking &nbsp;&nbsp;&nbsp;&nbsp;&nbsp;&nbsp;&nbsp;&nbsp;&nbsp; Internet of Things &nbsp;&nbsp;&nbsp;&nbsp;&nbsp;&nbsp;&nbsp;&nbsp; Data Centre &amp; Cloud &nbsp;&nbsp;&nbsp;&nbsp;&nbsp;&nbsp;&nbsp; Voice &amp; Collaboration &nbsp;&nbsp;&nbsp;&nbsp;&nbsp;&nbsp; Business TV</div>
  <div class="a" style="left:0;top:172px;width:851px;height:278px;background:linear-gradient(90deg,#2a2d31,#3a4046 50%,#1f2a30 75%,#2c3a40)"></div>
  <div class="t w" style="left:10px;top:196px;font-size:6.5px"><span class="ul">Data centre &amp; cloud solutions</span> &gt; Colocation Services</div>
  <div class="a" style="left:0;top:220px;width:660px;height:1px;background:rgba(255,255,255,.3)"></div>
  <div class="a" style="left:0;top:233px;width:362px;height:275px;background:#2b2b2b"></div>
  <div class="t w" style="left:2px;top:338px;font-size:20px;letter-spacing:.5px">Colocation services</div>
  <div class="t" style="left:2px;top:377px;font-size:7px;color:#ccc;line-height:10px">Safeguard your IT infrastructure equipment and mission-critical<br>data inside a secure data centre facility.</div>
  <div class="a" style="left:362px;top:233px;width:300px;height:272px;background:linear-gradient(90deg,#1d2a33 0%,#3e5566 20%,#7d8f99 35%,#e8e8e4 48%,#e2e2de 52%,#7d8f99 62%,#2f4450 80%,#1c2830)"></div>
  <div class="a" style="left:362px;top:233px;width:300px;height:60px;background:linear-gradient(180deg,rgba(200,215,225,.7),rgba(0,0,0,0))"></div>
  <div class="a" style="left:362px;top:470px;width:300px;height:35px;background:linear-gradient(180deg,rgba(0,0,0,0),rgba(150,150,145,.6))"></div>
  <div class="t" style="left:-2px;top:577px;font-size:14px">tter home for your infrastructure hardware</div>
  <div class="t" style="left:0;top:672px;font-size:8px;font-weight:bold">ce costs</div>
  <div class="a" style="left:0;top:690px;width:130px;font-size:6px;color:#888;line-height:8px">and cooling resources are among all tenants, lowering often-unpredictable costs in of a regular monthly fee.</div>
  <svg class="a" style="left:146px;top:630px" width="34" height="30" viewBox="0 0 34 30" fill="none" stroke="#555" stroke-width="1.4"><circle cx="12" cy="14" r="6"/><circle cx="24" cy="10" r="7"/><path d="M2 28c2-6 6-8 10-8s8 2 10 8"/></svg>
  <div class="t" style="left:141px;top:672px;font-size:8px;font-weight:bold">Eliminate hassles</div>
  <div class="a" style="left:141px;top:690px;width:160px;font-size:6px;color:#888;line-height:8px">Our 24/7 support and managed service technicians allow you to offload critical day-to-day operations so you can focus on your customers without worrying about business continuity.</div>
  <svg class="a" style="left:318px;top:630px" width="36" height="30" viewBox="0 0 36 30" fill="none" stroke="#555" stroke-width="1.4"><circle cx="9" cy="18" r="7"/><path d="M18 26V16M23 26V12M28 26V8M33 26V4"/></svg>
  <div class="t" style="left:315px;top:672px;font-size:8px;font-weight:bold">Scale more easily</div>
  <div class="a" style="left:315px;top:690px;width:165px;font-size:6px;color:#888;line-height:8px">You'll always be able to add to your environment and connect your interface with us to create a resilient hybrid solution. Scale up or down and replace old equipment while freeing up space at your workplace. We take care of the logistics.</div>
  <svg class="a" style="left:493px;top:626px" width="36" height="34" viewBox="0 0 36 34" fill="none" stroke="#555" stroke-width="1.3"><circle cx="18" cy="17" r="5"/><circle cx="5" cy="8" r="3"/><circle cx="31" cy="8" r="3"/><circle cx="5" cy="27" r="3"/><circle cx="31" cy="27" r="3"/><circle cx="18" cy="4" r="3"/><path d="M8 9l6 5M28 9l-6 5M8 26l6-5M28 26l-6-5M18 7v5"/></svg>
  <div class="t" style="left:490px;top:672px;font-size:8px;font-weight:bold">Connect with the world</div>
  <div class="a" style="left:490px;top:690px;width:160px;font-size:6px;color:#888;line-height:8px">By hosting Megaport, we provide onramps for you to integrate with other data centres and cloud providers around the world.</div>
  <div class="a" style="left:0;top:842px;width:634px;height:160px;background:linear-gradient(90deg,#3c4850,#5b6770 20%,#6b767e 50%,#56636c 80%,#3a4650)"></div>
  <div class="t w" style="left:0;top:866px;width:600px;text-align:center;font-size:12.5px;line-height:22px">Contact a representative or learn more<br>about our data centre and cloud<br>solutions</div>
  <div class="btn" style="left:208px;top:951px;width:66px;height:26px;font-size:6.5px">Contact us</div>
  <div class="btn" style="left:301px;top:951px;width:88px;height:26px;font-size:6.5px">Learn more &nbsp;&gt;</div>
  <div class="t" style="left:0;top:1050px;font-size:12px">a centre features</div>
  <div class="t" style="left:0;top:1085px;font-size:6px;color:#888;line-height:8px">ta centre is a secure colocation facility equipped to handle the high-power density of today's<br>while delivering the bandwidth and low latency your business needs to remain agile and<br>itive.</div>
  <div class="a" style="left:0;top:1144px;width:634px;height:485px;background:#f5f5f5"></div>
  <div class="t" style="left:0;top:1170px;font-size:11px">Features include:</div>
  <div class="a" style="left:0;top:1210px;width:610px;height:1px;background:#ccc"></div>
  <div class="a" style="left:0;top:1305px;width:610px;height:1px;background:#ccc"></div>
  <div class="a" style="left:0;top:1402px;width:610px;height:1px;background:#ccc"></div>
  <div class="a" style="left:0;top:1501px;width:610px;height:1px;background:#ccc"></div>
  <div class="t" style="left:0;top:1230px;font-size:6.5px;color:#555">Redundant cooling system</div>
  <div class="t" style="left:0;top:1325px;font-size:6.5px;color:#555">Power backup</div>
  <div class="t" style="left:0;top:1421px;font-size:6.5px;color:#555">Sophisticated security</div>
  <div class="t" style="left:0;top:1519px;font-size:6.5px;color:#555">Network redundancy and fire suppression</div>
  <div class="a" style="left:250px;top:1230px;width:360px;font-size:6px;color:#555;line-height:10px">• &nbsp;&nbsp;&nbsp; N+1 cooling redundancy<br>• &nbsp;&nbsp;&nbsp; Redundant computer-controlled compressors, hot aisle/cold aisle containment and humidity-control systems<br>• &nbsp;&nbsp;&nbsp; Perforated cabinet doors for temperature control</div>
  <div class="a" style="left:250px;top:1325px;width:360px;font-size:6px;color:#555;line-height:10px">• &nbsp;&nbsp;&nbsp; N+1 power redundancy<br>• &nbsp;&nbsp;&nbsp; Redundant uninterrupted power supply (UPS) systems<br>• &nbsp;&nbsp;&nbsp; High-capacity continuous run diesel generators with fuel for a minimum of 24 hours of operation</div>
  <div class="a" style="left:250px;top:1421px;width:360px;font-size:6px;color:#555;line-height:10px">• &nbsp;&nbsp;&nbsp; Unmarked facilities with single secure entrances for customers and staff<br>• &nbsp;&nbsp;&nbsp; Two-stage authentication process at all facilities, including biometric authentication<br>• &nbsp;&nbsp;&nbsp; Individually locked cabinets<br>• &nbsp;&nbsp;&nbsp; 24/7 interior and exterior low-light CCTV camera monitoring</div>
  <div class="a" style="left:250px;top:1519px;width:360px;font-size:6px;color:#555;line-height:10px">• &nbsp;&nbsp;&nbsp; Nationwide fibre network, including access points in the U.S. and overseas<br>• &nbsp;&nbsp;&nbsp; Multi-homed network with extensive peering and Tier 1 transit providers<br>• &nbsp;&nbsp;&nbsp; Two-stage, pre-action dry pipe sprinkler system and/or gas suppression</div>
  <div class="t" style="left:0;top:1685px;font-size:13px">ations</div>
  <div class="t" style="left:0;top:1718px;font-size:6px;color:#888">a total of 12 data centres on our nationwide 25,000 km fibre optic backbone network</div>
  <div class="a" style="left:0;top:0;width:851px;height:1800px;background:linear-gradient(90deg,rgba(0,0,0,.24) 0%,rgba(0,0,0,.1) 40%,rgba(0,0,0,0) 75%)"></div>
</div>

<!-- ============ WINDOW C (center) ============ -->
<div class="win" style="left:1923px;top:781px;width:1161px;height:1969px;z-index:3;box-shadow:0 0 50px rgba(0,0,0,.15)">
  <div class="dot" style="left:38px;top:24px;width:18px;height:18px;background:#fe5f57"></div>
  <div class="dot" style="left:65px;top:24px;width:18px;height:18px;background:#fcc66a"></div>
  <div class="dot" style="left:91px;top:24px;width:18px;height:18px;background:#6ee36b"></div>
  <div class="a" style="left:145px;top:24px;width:22px;height:18px;border:1.5px solid #999;border-radius:2px"></div>
  <div class="a" style="left:147px;top:26px;width:5px;height:14px;background:#bbb"></div>
  <div class="t" style="left:195px;top:17px;font-size:22px;color:#999">&lsaquo; &nbsp;&nbsp; &rsaquo;</div>
  <div class="a" style="left:383px;top:19px;width:421px;height:28px;background:#f2f2f2;border-radius:13px"></div>
  <div class="t" style="left:535px;top:27px;font-size:9px;color:#bbb">&#9906; Search or enter website name</div>
  <div class="t" style="left:1058px;top:14px;font-size:28px;color:#777;font-weight:300">+</div>
  <div class="a" style="left:1103px;top:22px;width:17px;height:20px;border:1.5px solid #999;border-radius:3px"></div>
  <div class="a" style="left:0;top:64px;width:1161px;height:3px;background:#555"></div>
  <div class="a" style="left:0;top:67px;width:1161px;height:25px;background:#2a2a2a"></div>
  <div class="t w" style="left:252px;top:75px;font-size:6.5px;font-weight:bold">Personal &nbsp;&nbsp;&nbsp; Business &nbsp;&nbsp;&nbsp; Wholesale</div>
  <div class="t w" style="left:773px;top:75px;font-size:6.5px;font-weight:bold">ON &#8964; &nbsp;&nbsp;&nbsp;&nbsp;&nbsp;&nbsp; FR</div>
  <div class="a red" style="left:841px;top:67px;width:53px;height:25px"></div>
  <div class="t w" style="left:853px;top:75px;font-size:6.5px;font-weight:bold">Sign In</div>
  <div class="t w" style="left:912px;top:72px;font-size:11px">&#9906;</div>
  <div class="logo" style="left:252px;top:100px"><div class="r" style="width:13px;height:15px"></div><div style="margin-left:17px;font-size:14px">ROGERS</div><div style="margin-left:17px;font-size:13px">BUSINESS.</div></div>
  <div class="t" style="left:612px;top:121px;font-size:7px">&#9671; Promotions &nbsp;&nbsp;&nbsp;&nbsp; &#9743; Sales &nbsp;&nbsp;&nbsp;&nbsp; &#9743; Support</div>
  <div class="a" style="left:819px;top:111px;width:102px;height:27px;border-radius:12px;box-shadow:0 1px 4px rgba(0,0,0,.18);font-size:7px;line-height:27px;text-align:center">&#9788; Solution Finder</div>
  <div class="dot" style="left:914px;top:105px;width:13px;height:13px;background:#da291c;color:#fff;font-size:8px;text-align:center;line-height:13px">&#10003;</div>
  <div class="a" style="left:0;top:143px;width:1161px;height:33px;background:#f6f6f6"></div>
  <div class="t" style="left:252px;top:155px;font-size:7px;color:#333">Wireless &#8964;</div>
  <div class="t" style="left:326px;top:155px;font-size:7px;color:#333">Internet &amp; Networking &#8964;</div>
  <div class="t" style="left:451px;top:155px;font-size:7px;color:#333">Internet of Things &#8964;</div>
  <div class="t" style="left:555px;top:155px;font-size:7px;color:#333">Data Centre &amp; Cloud &#8964;</div>
  <div class="t" style="left:672px;top:155px;font-size:7px;color:#333">Voice &amp; Collaboration &#8964;</div>
  <div class="t" style="left:794px;top:155px;font-size:7px;color:#333">Business TV &#8964;</div>
  <div class="a" style="left:0;top:176px;width:1161px;height:425px;background:#2b2b2b"></div>
  <div class="t w" style="left:252px;top:288px;font-size:25px;line-height:33px">Spotlight on Small<br>Businesses</div>
  <div class="t" style="left:252px;top:360px;font-size:8.5px;color:#ccc;line-height:16px">We're featuring Canadian entrepreneurs from across<br>Canada and sharing the stories of their success.</div>
  <div class="btn" style="left:252px;top:419px;width:94px;height:27px;font-size:7.5px">Read Stories &nbsp;&gt;</div>
  <div class="a" style="left:537px;top:176px;width:124px;height:384px;background:linear-gradient(180deg,#e4d7c5 0%,#cfc1ac 30%,#b59f84 45%,#c7a88a 55%,#1b1b1b 70%,#161616 100%)"></div>
  <div class="a" style="left:572px;top:310px;width:50px;height:60px;background:#c99a78;border-radius:25px 25px 20px 20px"></div>
  <div class="a" style="left:575px;top:205px;width:14px;height:20px;background:#222;border-radius:7px 7px 2px 2px"></div>
  <div class="a" style="left:665px;top:176px;width:129px;height:384px;background:linear-gradient(90deg,#d5d8d9,#f2f2f0 30%,#dcdcd8 60%,#b9bcbc)"></div>
  <div class="a" style="left:700px;top:330px;width:50px;height:120px;background:linear-gradient(180deg,#c9a083 0 25%,#2a2a2a 25% 60%,#cfcfcf 60%);border-radius:20px 20px 6px 6px"></div>
  <div class="a" style="left:798px;top:176px;width:124px;height:384px;background:linear-gradient(180deg,#0e1420 0%,#1c2230 30%,#6b4a3a 45%,#1a1a1a 60%,#141414 100%)"></div>
  <div class="a" style="left:805px;top:290px;width:50px;height:70px;background:#a8705a;border-radius:25px"></div>
  <div class="a" style="left:860px;top:275px;width:45px;height:65px;background:#c49a82;border-radius:22px"></div>
  <div class="a" style="left:253px;top:559px;width:669px;height:78px;background:#4a4a4a;display:flex">
    <div style="flex:1;border-right:1px solid #666;color:#fff;font-size:6.5px;text-align:center;padding-top:42px;line-height:9px">Small Business Month<br>Offers</div>
    <div style="flex:1;border-right:1px solid #666;color:#fff;font-size:6.5px;text-align:center;padding-top:42px">Wireless Plans</div>
    <div style="flex:1;border-right:1px solid #666;color:#fff;font-size:6.5px;text-align:center;padding-top:42px">Internet Services</div>
    <div style="flex:1;border-right:1px solid #666;color:#fff;font-size:6.5px;text-align:center;padding-top:42px">Latest Devices</div>
    <div style="flex:1;border-right:1px solid #666;color:#fff;font-size:6.5px;text-align:center;padding-top:42px">Hybrid Work</div>
    <div style="flex:1;color:#fff;font-size:6.5px;text-align:center;padding-top:42px">My Business Hub</div>
  </div>
  <svg class="a" style="left:253px;top:570px" width="669" height="24" viewBox="0 0 669 24" fill="none" stroke="#ddd" stroke-width="1.3">
    <path d="M48 3h3l3 13h10l2-8H53M55 20a1.5 1.5 0 1 0 .1 0M63 20a1.5 1.5 0 1 0 .1 0"/>
    <rect x="161" y="4" width="8" height="15" rx="1.5"/>
    <rect x="271" y="4" width="16" height="11"/><path d="M268 18h22"/>
    <path d="M383 3v16h8v-9l-4-2"/>
    <path d="M492 19v-8l6-5 6 5v8M500 8h6v11"/>
    <circle cx="612" cy="7" r="3.5"/><path d="M605 21c1-6 4-8 7-8s6 2 7 8"/>
  </svg>
  <div class="t" style="left:0;top:686px;width:1161px;text-align:center;font-size:13px;margin-left:-3px">Do more with the right business products</div>
  <div class="a" style="left:573px;top:720px;width:28px;height:1.5px;background:#da291c"></div>
  <div class="a" style="left:252px;top:746px;width:328px;height:276px;background:#f6f6f6"></div>
  <div class="a" style="left:252px;top:746px;width:328px;height:138px;background:linear-gradient(180deg,#2f4b55 0%,#3a6a72 35%,#c9a53a 60%,#e6e0d6 75%,#9b8d80 100%)"></div>
  <div class="a" style="left:405px;top:760px;width:70px;height:120px;background:linear-gradient(180deg,#3b2a22 0 20%,#c79a80 20% 35%,#6e6a70 35%);border-radius:30px 30px 6px 6px"></div>
  <div class="a" style="left:340px;top:805px;width:50px;height:35px;background:#e5e5e2;transform:skewX(-14deg)"></div>
  <div class="t" style="left:271px;top:906px;font-size:10.5px">Small Businesses deserve big value &rsaquo;</div>
  <div class="a" style="left:271px;top:928px;width:290px;font-size:6.5px;color:#777;line-height:10px">Experience Speed and Savings when you sign up for a Rogers Business Internet™ 1Gb plan for only $79.99/mo.* on a 3-yr term.¹<br><br>Plus, for a limited time receive a $200 activation credit.²</div>
  <div class="a" style="left:594px;top:746px;width:328px;height:276px;background:#f6f6f6"></div>
  <div class="a" style="left:594px;top:746px;width:328px;height:138px;background:linear-gradient(90deg,#aab3b3,#d8dcda 25%,#c9ccc8 45%,#8f9593 65%,#6a5548 85%,#8a5a48)"></div>
  <div class="a" style="left:700px;top:755px;width:70px;height:129px;background:linear-gradient(180deg,#2c2420 0 15%,#c5977c 15% 40%,#9a9a98 40%);border-radius:30px 30px 4px 4px"></div>
  <div class="t" style="left:613px;top:906px;font-size:10.5px;line-height:20px">Get wall to wall WiFi coverage for your<br>staff and guests &rsaquo;</div>
  <div class="a" style="left:613px;top:948px;width:290px;font-size:6.5px;color:#777;line-height:10px">Enjoy affordable business WiFi with robust connectivity you can rely on.</div>
  <div class="a" style="left:252px;top:1037px;width:328px;height:251px;background:#f6f6f6"></div>
  <div class="a" style="left:252px;top:1037px;width:328px;height:139px;background:linear-gradient(90deg,#c8c4c0 0%,#6a6460 10%,#a88c74 25%,#55504e 45%,#e8e8e6 55%,#f0efed 80%,#d8d6d2)"></div>
  <div class="a" style="left:510px;top:1040px;width:42px;height:136px;background:linear-gradient(180deg,#3a2a22 0 20%,#f1e6dc 20% 50%,#6e6e6e 50%);border-radius:20px 20px 0 0"></div>
  <div class="t" style="left:271px;top:1198px;font-size:10.5px;line-height:20px">Stay connected in today's world of<br>hybrid work &rsaquo;</div>
  <div class="a" style="left:271px;top:1240px;width:290px;font-size:6.5px;color:#777;line-height:10px">Modern solutions for connectivity and collaboration from Rogers Business and Microsoft</div>
  <div class="a" style="left:594px;top:1037px;width:328px;height:251px;background:#f6f6f6"></div>
  <div class="a" style="left:594px;top:1037px;width:328px;height:139px;background:linear-gradient(180deg,#c9b59c 0%,#a8765a 20%,#8c5a44 50%,#3a2a24 70%,#b84a3a 75%,#8c8070 85%,#b0a896)"></div>
  <div class="a" style="left:840px;top:1037px;width:82px;height:60px;background:linear-gradient(180deg,#e9e3d8,#d8d2c6)"></div>
  <div class="t" style="left:613px;top:1198px;font-size:10.5px;line-height:20px">Get high-speed internet where your<br>business needs it &rsaquo;</div>
  <div class="a" style="left:613px;top:1240px;width:290px;font-size:6.5px;color:#777;line-height:10px">Rogers Wireless Business Internet provides high-speed, secure connectivity for rural or temporary locations.</div>
  <div class="a" style="left:252px;top:1366px;width:345px;height:229px;background:linear-gradient(90deg,#d4cfc8 0%,#9b7a66 15%,#4a2a2a 30%,#2c2434 50%,#7a6a70 65%,#e8e6e2 85%,#cfcac2)"></div>
  <div class="a" style="left:290px;top:1380px;width:70px;height:200px;background:linear-gradient(180deg,#5a3a2a 0 20%,#d8b098 20% 40%,#6a2a34 40%);border-radius:30px 30px 10px 10px"></div>
  <div class="a" style="left:596px;top:1357px;width:326px;height:247px;background:#2b2b2b"></div>
  <div class="t w" style="left:629px;top:1395px;font-size:13.5px;line-height:24px">Save BIG with Advantage<br>Mobility™</div>
  <div class="a" style="left:629px;top:1449px;width:265px;font-size:6px;color:#ddd;line-height:10px">Get Microsoft Teams Essentials FREE¹ when you sign up for a Rogers Business wireless unlimited data plan* for $50/month¹ with an eligible Business Internet plan on a 3-yr term.<br><br><b>*50Gb</b> of high speed data, reduced speeds thereafter.</div>
  <div class="btn" style="left:629px;top:1526px;width:89px;height:24px;font-size:6.5px">Learn More &nbsp;&gt;</div>
  <div class="btn" style="left:733px;top:1526px;width:99px;height:24px;font-size:6.5px">Contact Sales &nbsp;&gt;</div>
  <div class="a" style="left:252px;top:1652px;width:325px;height:236px;background:#2b2b2b"></div>
  <div class="t w" style="left:285px;top:1685px;font-size:13.5px">Brainstorm without borders</div>
  <div class="a" style="left:285px;top:1713px;width:265px;font-size:6px;color:#ddd;line-height:10px">Call and collaborate anywhere in Canada and the US when you activate a $100/mo.* after Automatic Payments Discount¹ on a <b>Rogers Infinite</b> plan with 50GB of high-speed data, reduced speeds thereafter.¹<br><br>Plus get the Samsung Galaxy S22 for $0 down with financing.²</div>
  <div class="btn" style="left:285px;top:1809px;width:91px;height:24px;font-size:6.5px">Learn More &nbsp;&gt;</div>
  <div class="btn" style="left:392px;top:1809px;width:99px;height:24px;font-size:6.5px">Contact Sales &nbsp;&gt;</div>
  <div class="a" style="left:640px;top:1660px;width:260px;height:200px;background:linear-gradient(135deg,#fff 30%,#f2f2f2 50%,#e5e5e5 70%,#fff 90%)"></div>
  <div class="a" style="left:700px;top:1705px;width:230px;height:70px;background:linear-gradient(180deg,#fafafa,#dcdcdc);border-radius:30px;transform:rotate(-38deg);box-shadow:0 4px 10px rgba(0,0,0,.1)"></div>
  <div class="dot" style="left:800px;top:1725px;width:20px;height:20px;background:#111"></div>
  <div class="dot" style="left:775px;top:1745px;width:20px;height:20px;background:#111"></div>
  <div class="dot" style="left:750px;top:1765px;width:20px;height:20px;background:#111"></div>
  <div class="t" style="left:703px;top:1799px;font-size:7px;font-weight:bold;color:#333">Galaxy S22 | S22+</div>
  <div class="a" style="left:240px;top:1935px;width:696px;height:40px;border:1px solid #eee;box-shadow:0 0 4px rgba(0,0,0,.05)"></div>
</div>

</body></html>
